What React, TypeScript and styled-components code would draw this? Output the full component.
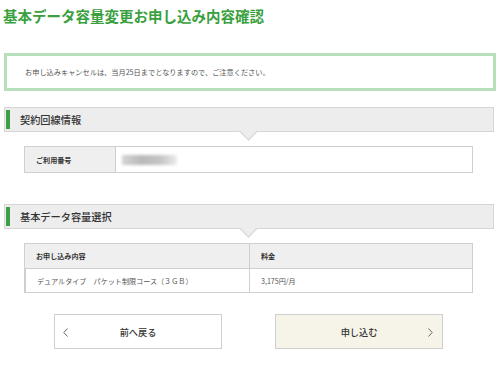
import React from "react";
import styled, { createGlobalStyle } from "styled-components";

const Global = createGlobalStyle`
  html, body { margin: 0; padding: 0; background: #ffffff; }
  body { font-family: "Noto Sans CJK JP", "Noto Sans", sans-serif; color: #333; }
  * { box-sizing: border-box; }
`;

const Page = styled.div`
  width: 500px;
  height: 368px;
  padding: 0 4px;
  display: flex;
  flex-direction: column;
  overflow: hidden;
`;

const Title = styled.h1`
  margin: 0;
  margin-left: -1px;
  height: 32px;
  line-height: 32px;
  font-size: 14.5px;
  font-weight: 700;
  color: #3a9f3e;
  white-space: nowrap;
`;

const Notice = styled.div`
  margin-top: 21px;
  height: 38px;
  border: 3px solid #b6dfba;
  display: flex;
  align-items: center;
  padding-left: 18px;
  font-size: 7.2px;
  color: #555;
`;

const SectionHeader = styled.div<{ $mt: number }>`
  position: relative;
  margin-top: ${(p) => p.$mt}px;
  width: 490px;
  height: 25px;
  background: #ededed;
  border: 1px solid #d6d6d6;
  display: flex;
  align-items: center;
  padding-left: 15px;
  font-size: 10.2px;
  font-weight: 500;
  color: #333;

  &::before {
    content: "";
    position: absolute;
    left: 1px;
    top: 2px;
    bottom: 2px;
    width: 4px;
    background: #3c9e46;
  }

  &::after {
    content: "";
    position: absolute;
    left: 237px;
    bottom: -7px;
    width: 12px;
    height: 12px;
    background: #ededed;
    border-right: 1px solid #d6d6d6;
    border-bottom: 1px solid #d6d6d6;
    transform: rotate(45deg);
  }
`;

const Table = styled.div<{ $cols: string }>`
  margin-top: 14px;
  margin-left: 20px;
  width: 449px;
  display: grid;
  grid-template-columns: ${(p) => p.$cols};
  border: 1px solid #cfcfcf;
  border-bottom-width: 0;
`;

const Cell = styled.div<{ $head?: boolean; $h: number; $pl: number }>`
  height: ${(p) => p.$h}px;
  display: flex;
  align-items: center;
  padding-left: ${(p) => p.$pl}px;
  font-size: 7.1px;
  font-weight: ${(p) => (p.$head ? 700 : 400)};
  color: ${(p) => (p.$head ? "#333" : "#555")};
  background: ${(p) => (p.$head ? "#efefef" : "#ffffff")};
  border-bottom: 1px solid #cfcfcf;
  & + & {
    border-left: 1px solid #cfcfcf;
  }
`;

const Blur = styled.span`
  display: inline-block;
  width: 55px;
  height: 10px;
  background: linear-gradient(90deg, #d4d4d4 0%, #b9b9b9 35%, #c4c4c4 70%, #ececec 100%);
  filter: blur(1.5px);
`;

const Buttons = styled.div`
  margin-top: 21px;
  display: flex;
  justify-content: center;
  gap: 53px;
  padding-right: 3px;
`;

const Button = styled.div<{ $primary?: boolean }>`
  position: relative;
  width: 168px;
  height: 35px;
  border: 1px solid #cfcfcf;
  background: ${(p) => (p.$primary ? "#f6f4e8" : "#ffffff")};
  display: flex;
  align-items: center;
  justify-content: center;
  font-size: 9.2px;
  font-weight: 500;
  color: #333;
`;

const Chevron = styled.svg<{ $side: "left" | "right" }>`
  position: absolute;
  top: 13px;
  ${(p) => (p.$side === "left" ? "left: 8px;" : "right: 9px;")}
  width: 5px;
  height: 9px;
`;

export default function App() {
  return (
    <>
      <Global />
      <Page>
        <Title>基本データ容量変更お申し込み内容確認</Title>
        <Notice>お申し込みキャンセルは、当月25日までとなりますので、ご注意ください。</Notice>

        <SectionHeader $mt={16}>契約回線情報</SectionHeader>
        <Table $cols="90px 1fr">
          <Cell $head $h={26} $pl={11}>ご利用番号</Cell>
          <Cell $h={26} $pl={6}>
            <Blur />
          </Cell>
        </Table>

        <SectionHeader $mt={31}>基本データ容量選択</SectionHeader>
        <Table $cols="224px 1fr">
          <Cell $head $h={25} $pl={11}>お申し込み内容</Cell>
          <Cell $head $h={25} $pl={11}>料金</Cell>
          <Cell $h={24} $pl={11}>デュアルタイプ　パケット制限コース（３ＧＢ）</Cell>
          <Cell $h={24} $pl={11}>3,175円/月</Cell>
        </Table>

        <Buttons>
          <Button>
            <Chevron $side="left" viewBox="0 0 5 9">
              <path d="M4.5 0.5 L0.8 4.5 L4.5 8.5" fill="none" stroke="#666" strokeWidth="1" />
            </Chevron>
            前へ戻る
          </Button>
          <Button $primary>
            申し込む
            <Chevron $side="right" viewBox="0 0 5 9">
              <path d="M0.5 0.5 L4.2 4.5 L0.5 8.5" fill="none" stroke="#666" strokeWidth="1" />
            </Chevron>
          </Button>
        </Buttons>
      </Page>
    </>
  );
}
